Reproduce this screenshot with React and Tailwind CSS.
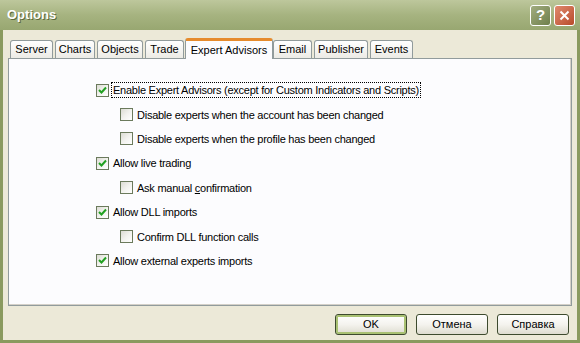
import React from "react";

const font = { fontFamily: '"Liberation Sans", Arial, sans-serif' };

function Check({ checked }) {
  return (
    <span className="relative inline-flex h-[13px] w-[13px] shrink-0 items-center justify-center border border-[#6b7a5c] bg-gradient-to-br from-[#dcdcd4] via-[#f2f2ee] to-white">
      {checked && (
        <svg width="9" height="9" viewBox="0 0 9 9">
          <path d="M1 4 L3.5 6.5 L8 1.5" fill="none" stroke="#21a121" strokeWidth="2" />
        </svg>
      )}
    </span>
  );
}

function Row({ checked, label, indent, focus }) {
  return (
    <div className={`flex h-[24.4px] items-center ${indent ? "pl-[24px]" : ""}`}>
      <Check checked={checked} />
      <span
        className={`ml-[3px] px-[1px] leading-[14px] text-[11px] tracking-[-0.25px] text-black ${focus ? "outline outline-1 outline-dotted outline-black" : ""}`}
      >
        {label}
      </span>
    </div>
  );
}

function Tab({ label, active, w }) {
  if (active) {
    return (
      <div
        className="relative z-10 -mb-[1px] flex h-[21px] shrink-0 items-start justify-center rounded-t-[3px] border-x border-t-[3px] border-x-[#919b9c] border-t-[#e68b2c] bg-[#fcfcfe] pt-[1px] text-[11px] text-black"
        style={{ width: w }}
      >
        {label}
      </div>
    );
  }
  return (
    <div
      className="flex h-[18px] shrink-0 items-center justify-center rounded-t-[3px] border-x border-t border-[#919b9c] bg-gradient-to-b from-white to-[#ecebe5] text-[11px] text-black"
      style={{ width: w }}
    >
      {label}
    </div>
  );
}

function Btn({ label, def }) {
  return (
    <div
      className={`flex h-[21px] w-[72px] items-center justify-center rounded-[3px] border border-[#3d4a2e] bg-gradient-to-b from-white via-[#f4f3ee] to-[#dedcd0] text-[11px] text-black ${def ? "shadow-[inset_0_0_0_2px_#a9c173]" : ""}`}
    >
      {label}
    </div>
  );
}

export default function App() {
  return (
    <div className="flex h-[343px] w-[580px] flex-col overflow-hidden bg-[#8a9a5f]" style={font}>
      <div className="flex h-[30px] shrink-0 items-center justify-between bg-gradient-to-b from-[#bdc79c] via-[#a6b380] to-[#98a771] pl-[7px] pr-[5px]">
        <span className="text-[13px] font-bold text-white [text-shadow:1px_1px_0_#5d6a3d]">Options</span>
        <div className="flex gap-[3px]">
          <div className="flex h-[21px] w-[21px] items-center justify-center rounded-[3px] border border-white bg-gradient-to-br from-[#a2ad80] to-[#6f7f4b] text-[15px] font-bold text-white">
            ?
          </div>
          <div className="flex h-[21px] w-[21px] items-center justify-center rounded-[3px] border border-white bg-gradient-to-br from-[#e08a6e] to-[#b84a2a]">
            <svg width="11" height="11" viewBox="0 0 11 11">
              <path d="M1.5 1.5 L9.5 9.5 M9.5 1.5 L1.5 9.5" stroke="white" strokeWidth="2" />
            </svg>
          </div>
        </div>
      </div>
      <div className="mx-[3px] mb-[3px] flex flex-1 flex-col bg-[#ece9d8] px-[5px] pt-[8px]">
        <div className="flex items-end gap-[2px] pl-[2px]">
          <Tab label="Server" w={43} />
          <Tab label="Charts" w={40} />
          <Tab label="Objects" w={46} />
          <Tab label="Trade" w={39} />
          <div className="-ml-[1px]">
            <Tab label="Expert Advisors" active w={88} />
          </div>
          <div className="-ml-[2px]">
            <Tab label="Email" w={39} />
          </div>
          <Tab label="Publisher" w={54} />
          <Tab label="Events" w={43} />
        </div>
        <div className="h-[248px] border border-[#919b9c] bg-[#fcfcfe] pl-[87px] pt-[19px] shadow-[inset_-1px_-1px_0_#d4d0c8]">
          <Row checked focus label="Enable Expert Advisors (except for Custom Indicators and Scripts)" />
          <Row indent label="Disable experts when the account has been changed" />
          <Row indent label="Disable experts when the profile has been changed" />
          <Row checked label="Allow live trading" />
          <Row indent label={<>Ask manual <u>c</u>onfirmation</>} />
          <Row checked label="Allow DLL imports" />
          <Row indent label="Confirm DLL function calls" />
          <Row checked label="Allow external experts imports" />
        </div>
        <div className="flex justify-end gap-[9px] pr-[3px] pt-[8px]">
          <Btn label="OK" def />
          <Btn label="Отмена" />
          <Btn label="Справка" />
        </div>
      </div>
    </div>
  );
}
